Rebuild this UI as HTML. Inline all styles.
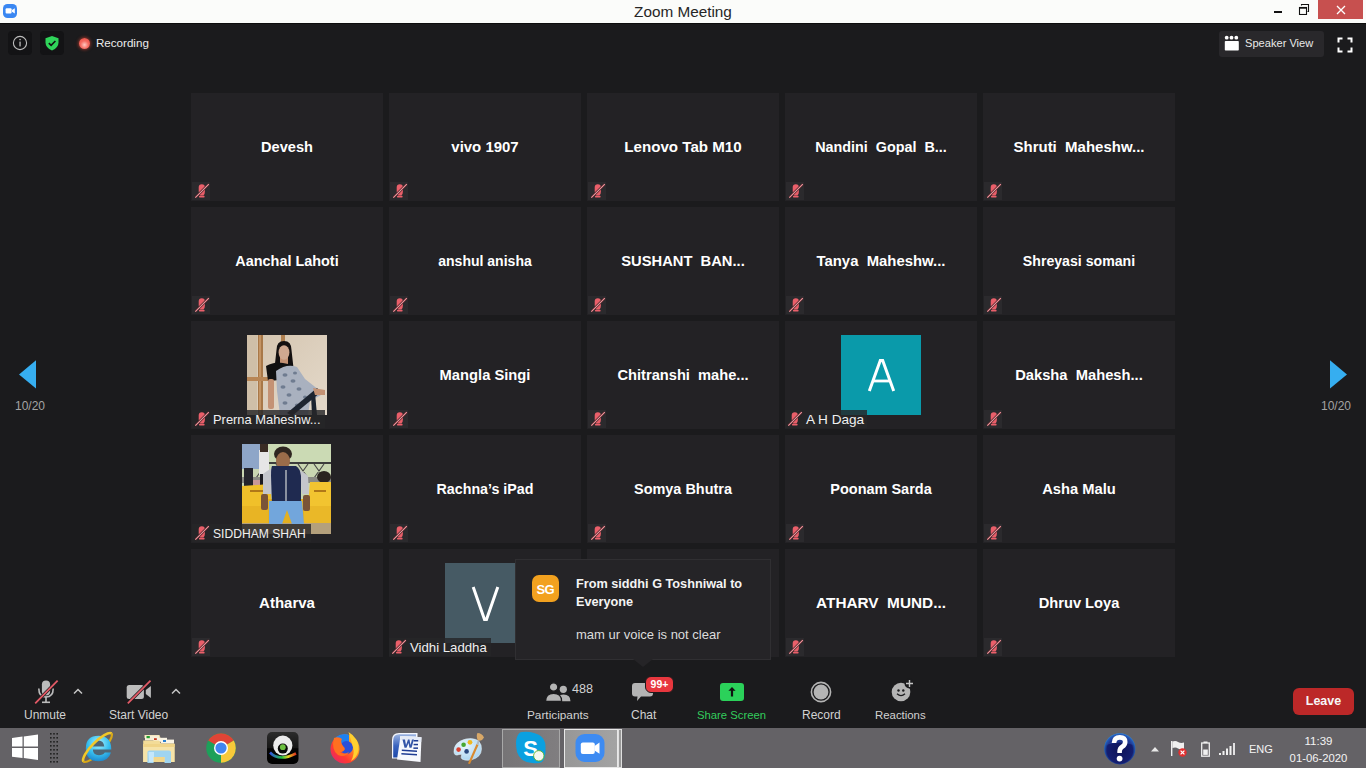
<!DOCTYPE html>
<html><head><meta charset="utf-8"><style>
html,body{margin:0;padding:0;width:1366px;height:768px;overflow:hidden;background:#1b1b1d;font-family:"Liberation Sans",sans-serif;}
.a{position:absolute}
.tile{position:absolute;width:192px;height:108px;background:#232225}
.nm{position:absolute;width:192px;height:20px;line-height:20px;text-align:center;color:#fff;font-weight:bold;font-size:14px;white-space:pre}
.lbl{position:absolute;height:18px;background:rgba(38,38,40,0.82)}
.lt{position:absolute;color:#f0f0f0;font-size:12.5px;line-height:18px;white-space:pre}
.tb{position:absolute;color:#d2d2d2;font-size:12px;line-height:14px;white-space:pre}
</style></head><body>
<!-- title bar -->
<div class="a" style="left:0;top:0;width:1366px;height:23px;background:#fbfcfa"></div>
<div class="a" style="left:0;top:23px;width:1366px;height:1px;background:#0d0d0d"></div>
<svg class="a" style="left:2px;top:3px" width="16" height="16" viewBox="0 0 16 16">
<rect x="1" y="1" width="14" height="14" rx="4.5" fill="#3a87f2"/>
<rect x="3.6" y="5.2" width="6" height="5.4" rx="1" fill="#fff"/>
<path d="M10 7 L12.8 5.2 L12.8 10.6 L10 8.8 Z" fill="#fff"/>
</svg>
<div class="a" style="left:0;top:0;width:1366px;text-align:center;font-size:15.3px;line-height:23px;color:#262626;">Zoom Meeting</div>
<div class="a" style="left:1274px;top:11px;width:8px;height:2px;background:#111"></div>
<svg class="a" style="left:1298px;top:3px" width="12" height="12" viewBox="0 0 12 12">
<rect x="1.5" y="4.5" width="7" height="7" fill="none" stroke="#111" stroke-width="1.1"/>
<rect x="1.5" y="4.5" width="7" height="1.2" fill="#111"/>
<path d="M3.5 2.5 V1.5 H10.5 V8.5 H9.5" fill="none" stroke="#111" stroke-width="1.1"/>
</svg>
<div class="a" style="left:1318px;top:0;width:45px;height:19px;background:#c7504f"></div>
<svg class="a" style="left:1336px;top:5px" width="10" height="10" viewBox="0 0 10 10">
<path d="M1 1 L9 9 M9 1 L1 9" stroke="#fff" stroke-width="1.3"/>
</svg>
<!-- top meeting bar -->
<div class="a" style="left:8px;top:31px;width:24px;height:24px;border-radius:4px;background:#131315"></div>
<svg class="a" style="left:8px;top:31px" width="24" height="24" viewBox="0 0 24 24">
<circle cx="12" cy="12" r="6.6" fill="none" stroke="#bdbdbd" stroke-width="1.1"/>
<rect x="11.4" y="10.6" width="1.3" height="4.8" fill="#bdbdbd"/>
<circle cx="12.05" cy="8.6" r="0.8" fill="#bdbdbd"/>
</svg>
<div class="a" style="left:40px;top:31px;width:24px;height:24px;border-radius:4px;background:#131315"></div>
<svg class="a" style="left:40px;top:31px" width="24" height="24" viewBox="0 0 24 24">
<path d="M12 5 L18.5 7.3 L18.5 11.5 Q18.5 16.5 12 19.5 Q5.5 16.5 5.5 11.5 L5.5 7.3 Z" fill="#2fd45a"/>
<path d="M8.8 12.2 L11.1 14.4 L15.4 10" fill="none" stroke="#111" stroke-width="1.6"/>
</svg>
<div class="a" style="left:78.5px;top:38px;width:11px;height:11px;border-radius:50%;background:radial-gradient(circle at 50% 62%, #ffc8c0 0%, #f46a60 45%, #e8483e 100%);box-shadow:0 0 3px 1px rgba(220,70,50,0.55)"></div>
<div class="a" style="left:96px;top:36px;font-size:11.6px;line-height:14px;color:#ececec;white-space:pre">Recording</div>
<div class="a" style="left:1219px;top:31px;width:105px;height:26px;border-radius:3px;background:#29282b"></div>
<svg class="a" style="left:1224px;top:35px" width="16" height="17" viewBox="0 0 16 17">
<circle cx="2.7" cy="2.7" r="1.9" fill="#fff"/><circle cx="7.5" cy="2.7" r="1.9" fill="#fff"/><circle cx="12.3" cy="2.7" r="1.9" fill="#fff"/>
<rect x="0.8" y="6" width="14" height="9.5" rx="0.8" fill="#fff"/>
</svg>
<div class="a" style="left:1245px;top:36px;font-size:11.1px;line-height:14px;color:#e8e8e8;white-space:pre">Speaker View</div>
<svg class="a" style="left:1337px;top:37px" width="16" height="16" viewBox="0 0 16 16">
<path d="M1.5 5.5 V1.5 H5.5 M10.5 1.5 H14.5 V5.5 M14.5 10.5 V14.5 H10.5 M5.5 14.5 H1.5 V10.5" fill="none" stroke="#fff" stroke-width="2"/>
</svg>
<!-- nav arrows -->
<svg class="a" style="left:17px;top:359px" width="22" height="31" viewBox="0 0 22 31">
<path d="M2 15.4 L19 1.3 L19 29.4 Z" fill="#36aef0"/>
</svg>
<div class="a" style="left:15px;top:399px;font-size:12px;line-height:14px;color:#a4a4a4;white-space:pre">10/20</div>
<svg class="a" style="left:1327px;top:359px" width="22" height="31" viewBox="0 0 22 31">
<path d="M20 15.4 L3 1.3 L3 29.4 Z" fill="#36aef0"/>
</svg>
<div class="a" style="left:1321px;top:399px;font-size:12px;line-height:14px;color:#a4a4a4;white-space:pre">10/20</div>

<div class="tile" style="left:191px;top:93px"></div>
<div class="nm" style="left:191px;top:137px;font-size:14.58px">Devesh</div>
<div style="position:absolute;left:192px;top:182px;width:18px;height:18px;background:#2b2a2d"></div><svg style="position:absolute;left:192px;top:182px" width="18" height="18" viewBox="0 0 18 18"><path d="M6.7 5.3 A3.1 3.1 0 0 1 12.9 5.3 L12.9 9.5 Q12.9 12.5 11.4 13.6 L8.2 13.6 Q6.7 12.5 6.7 9.5 Z" fill="#ea5f6a"/><rect x="7" y="13.8" width="5.6" height="1.6" rx="0.6" fill="#ea5f6a"/><line x1="3.3" y1="15.6" x2="16.8" y2="2.2" stroke="#4a2328" stroke-width="2.6"/><line x1="3.3" y1="15.6" x2="16.8" y2="2.2" stroke="#f39aa2" stroke-width="1.1"/></svg>
<div class="tile" style="left:389px;top:93px"></div>
<div class="nm" style="left:389px;top:137px;font-size:14.96px">vivo 1907</div>
<div style="position:absolute;left:390px;top:182px;width:18px;height:18px;background:#2b2a2d"></div><svg style="position:absolute;left:390px;top:182px" width="18" height="18" viewBox="0 0 18 18"><path d="M6.7 5.3 A3.1 3.1 0 0 1 12.9 5.3 L12.9 9.5 Q12.9 12.5 11.4 13.6 L8.2 13.6 Q6.7 12.5 6.7 9.5 Z" fill="#ea5f6a"/><rect x="7" y="13.8" width="5.6" height="1.6" rx="0.6" fill="#ea5f6a"/><line x1="3.3" y1="15.6" x2="16.8" y2="2.2" stroke="#4a2328" stroke-width="2.6"/><line x1="3.3" y1="15.6" x2="16.8" y2="2.2" stroke="#f39aa2" stroke-width="1.1"/></svg>
<div class="tile" style="left:587px;top:93px"></div>
<div class="nm" style="left:587px;top:137px;font-size:15.14px">Lenovo Tab M10</div>
<div style="position:absolute;left:588px;top:182px;width:18px;height:18px;background:#2b2a2d"></div><svg style="position:absolute;left:588px;top:182px" width="18" height="18" viewBox="0 0 18 18"><path d="M6.7 5.3 A3.1 3.1 0 0 1 12.9 5.3 L12.9 9.5 Q12.9 12.5 11.4 13.6 L8.2 13.6 Q6.7 12.5 6.7 9.5 Z" fill="#ea5f6a"/><rect x="7" y="13.8" width="5.6" height="1.6" rx="0.6" fill="#ea5f6a"/><line x1="3.3" y1="15.6" x2="16.8" y2="2.2" stroke="#4a2328" stroke-width="2.6"/><line x1="3.3" y1="15.6" x2="16.8" y2="2.2" stroke="#f39aa2" stroke-width="1.1"/></svg>
<div class="tile" style="left:785px;top:93px"></div>
<div class="nm" style="left:785px;top:137px;font-size:14.36px">Nandini  Gopal  B...</div>
<div style="position:absolute;left:786px;top:182px;width:18px;height:18px;background:#2b2a2d"></div><svg style="position:absolute;left:786px;top:182px" width="18" height="18" viewBox="0 0 18 18"><path d="M6.7 5.3 A3.1 3.1 0 0 1 12.9 5.3 L12.9 9.5 Q12.9 12.5 11.4 13.6 L8.2 13.6 Q6.7 12.5 6.7 9.5 Z" fill="#ea5f6a"/><rect x="7" y="13.8" width="5.6" height="1.6" rx="0.6" fill="#ea5f6a"/><line x1="3.3" y1="15.6" x2="16.8" y2="2.2" stroke="#4a2328" stroke-width="2.6"/><line x1="3.3" y1="15.6" x2="16.8" y2="2.2" stroke="#f39aa2" stroke-width="1.1"/></svg>
<div class="tile" style="left:983px;top:93px"></div>
<div class="nm" style="left:983px;top:137px;font-size:14.99px">Shruti  Maheshw...</div>
<div style="position:absolute;left:984px;top:182px;width:18px;height:18px;background:#2b2a2d"></div><svg style="position:absolute;left:984px;top:182px" width="18" height="18" viewBox="0 0 18 18"><path d="M6.7 5.3 A3.1 3.1 0 0 1 12.9 5.3 L12.9 9.5 Q12.9 12.5 11.4 13.6 L8.2 13.6 Q6.7 12.5 6.7 9.5 Z" fill="#ea5f6a"/><rect x="7" y="13.8" width="5.6" height="1.6" rx="0.6" fill="#ea5f6a"/><line x1="3.3" y1="15.6" x2="16.8" y2="2.2" stroke="#4a2328" stroke-width="2.6"/><line x1="3.3" y1="15.6" x2="16.8" y2="2.2" stroke="#f39aa2" stroke-width="1.1"/></svg>
<div class="tile" style="left:191px;top:207px"></div>
<div class="nm" style="left:191px;top:251px;font-size:14.43px">Aanchal Lahoti</div>
<div style="position:absolute;left:192px;top:296px;width:18px;height:18px;background:#2b2a2d"></div><svg style="position:absolute;left:192px;top:296px" width="18" height="18" viewBox="0 0 18 18"><path d="M6.7 5.3 A3.1 3.1 0 0 1 12.9 5.3 L12.9 9.5 Q12.9 12.5 11.4 13.6 L8.2 13.6 Q6.7 12.5 6.7 9.5 Z" fill="#ea5f6a"/><rect x="7" y="13.8" width="5.6" height="1.6" rx="0.6" fill="#ea5f6a"/><line x1="3.3" y1="15.6" x2="16.8" y2="2.2" stroke="#4a2328" stroke-width="2.6"/><line x1="3.3" y1="15.6" x2="16.8" y2="2.2" stroke="#f39aa2" stroke-width="1.1"/></svg>
<div class="tile" style="left:389px;top:207px"></div>
<div class="nm" style="left:389px;top:251px;font-size:14.04px">anshul anisha</div>
<div style="position:absolute;left:390px;top:296px;width:18px;height:18px;background:#2b2a2d"></div><svg style="position:absolute;left:390px;top:296px" width="18" height="18" viewBox="0 0 18 18"><path d="M6.7 5.3 A3.1 3.1 0 0 1 12.9 5.3 L12.9 9.5 Q12.9 12.5 11.4 13.6 L8.2 13.6 Q6.7 12.5 6.7 9.5 Z" fill="#ea5f6a"/><rect x="7" y="13.8" width="5.6" height="1.6" rx="0.6" fill="#ea5f6a"/><line x1="3.3" y1="15.6" x2="16.8" y2="2.2" stroke="#4a2328" stroke-width="2.6"/><line x1="3.3" y1="15.6" x2="16.8" y2="2.2" stroke="#f39aa2" stroke-width="1.1"/></svg>
<div class="tile" style="left:587px;top:207px"></div>
<div class="nm" style="left:587px;top:251px;font-size:14.72px">SUSHANT  BAN...</div>
<div style="position:absolute;left:588px;top:296px;width:18px;height:18px;background:#2b2a2d"></div><svg style="position:absolute;left:588px;top:296px" width="18" height="18" viewBox="0 0 18 18"><path d="M6.7 5.3 A3.1 3.1 0 0 1 12.9 5.3 L12.9 9.5 Q12.9 12.5 11.4 13.6 L8.2 13.6 Q6.7 12.5 6.7 9.5 Z" fill="#ea5f6a"/><rect x="7" y="13.8" width="5.6" height="1.6" rx="0.6" fill="#ea5f6a"/><line x1="3.3" y1="15.6" x2="16.8" y2="2.2" stroke="#4a2328" stroke-width="2.6"/><line x1="3.3" y1="15.6" x2="16.8" y2="2.2" stroke="#f39aa2" stroke-width="1.1"/></svg>
<div class="tile" style="left:785px;top:207px"></div>
<div class="nm" style="left:785px;top:251px;font-size:14.88px">Tanya  Maheshw...</div>
<div style="position:absolute;left:786px;top:296px;width:18px;height:18px;background:#2b2a2d"></div><svg style="position:absolute;left:786px;top:296px" width="18" height="18" viewBox="0 0 18 18"><path d="M6.7 5.3 A3.1 3.1 0 0 1 12.9 5.3 L12.9 9.5 Q12.9 12.5 11.4 13.6 L8.2 13.6 Q6.7 12.5 6.7 9.5 Z" fill="#ea5f6a"/><rect x="7" y="13.8" width="5.6" height="1.6" rx="0.6" fill="#ea5f6a"/><line x1="3.3" y1="15.6" x2="16.8" y2="2.2" stroke="#4a2328" stroke-width="2.6"/><line x1="3.3" y1="15.6" x2="16.8" y2="2.2" stroke="#f39aa2" stroke-width="1.1"/></svg>
<div class="tile" style="left:983px;top:207px"></div>
<div class="nm" style="left:983px;top:251px;font-size:14.13px">Shreyasi somani</div>
<div style="position:absolute;left:984px;top:296px;width:18px;height:18px;background:#2b2a2d"></div><svg style="position:absolute;left:984px;top:296px" width="18" height="18" viewBox="0 0 18 18"><path d="M6.7 5.3 A3.1 3.1 0 0 1 12.9 5.3 L12.9 9.5 Q12.9 12.5 11.4 13.6 L8.2 13.6 Q6.7 12.5 6.7 9.5 Z" fill="#ea5f6a"/><rect x="7" y="13.8" width="5.6" height="1.6" rx="0.6" fill="#ea5f6a"/><line x1="3.3" y1="15.6" x2="16.8" y2="2.2" stroke="#4a2328" stroke-width="2.6"/><line x1="3.3" y1="15.6" x2="16.8" y2="2.2" stroke="#f39aa2" stroke-width="1.1"/></svg>
<div class="tile" style="left:191px;top:321px"></div>
<div class="tile" style="left:389px;top:321px"></div>
<div class="nm" style="left:389px;top:365px;font-size:14.72px">Mangla Singi</div>
<div style="position:absolute;left:390px;top:410px;width:18px;height:18px;background:#2b2a2d"></div><svg style="position:absolute;left:390px;top:410px" width="18" height="18" viewBox="0 0 18 18"><path d="M6.7 5.3 A3.1 3.1 0 0 1 12.9 5.3 L12.9 9.5 Q12.9 12.5 11.4 13.6 L8.2 13.6 Q6.7 12.5 6.7 9.5 Z" fill="#ea5f6a"/><rect x="7" y="13.8" width="5.6" height="1.6" rx="0.6" fill="#ea5f6a"/><line x1="3.3" y1="15.6" x2="16.8" y2="2.2" stroke="#4a2328" stroke-width="2.6"/><line x1="3.3" y1="15.6" x2="16.8" y2="2.2" stroke="#f39aa2" stroke-width="1.1"/></svg>
<div class="tile" style="left:587px;top:321px"></div>
<div class="nm" style="left:587px;top:365px;font-size:14.66px">Chitranshi  mahe...</div>
<div style="position:absolute;left:588px;top:410px;width:18px;height:18px;background:#2b2a2d"></div><svg style="position:absolute;left:588px;top:410px" width="18" height="18" viewBox="0 0 18 18"><path d="M6.7 5.3 A3.1 3.1 0 0 1 12.9 5.3 L12.9 9.5 Q12.9 12.5 11.4 13.6 L8.2 13.6 Q6.7 12.5 6.7 9.5 Z" fill="#ea5f6a"/><rect x="7" y="13.8" width="5.6" height="1.6" rx="0.6" fill="#ea5f6a"/><line x1="3.3" y1="15.6" x2="16.8" y2="2.2" stroke="#4a2328" stroke-width="2.6"/><line x1="3.3" y1="15.6" x2="16.8" y2="2.2" stroke="#f39aa2" stroke-width="1.1"/></svg>
<div class="tile" style="left:785px;top:321px"></div>
<div class="tile" style="left:983px;top:321px"></div>
<div class="nm" style="left:983px;top:365px;font-size:14.72px">Daksha  Mahesh...</div>
<div style="position:absolute;left:984px;top:410px;width:18px;height:18px;background:#2b2a2d"></div><svg style="position:absolute;left:984px;top:410px" width="18" height="18" viewBox="0 0 18 18"><path d="M6.7 5.3 A3.1 3.1 0 0 1 12.9 5.3 L12.9 9.5 Q12.9 12.5 11.4 13.6 L8.2 13.6 Q6.7 12.5 6.7 9.5 Z" fill="#ea5f6a"/><rect x="7" y="13.8" width="5.6" height="1.6" rx="0.6" fill="#ea5f6a"/><line x1="3.3" y1="15.6" x2="16.8" y2="2.2" stroke="#4a2328" stroke-width="2.6"/><line x1="3.3" y1="15.6" x2="16.8" y2="2.2" stroke="#f39aa2" stroke-width="1.1"/></svg>
<div class="tile" style="left:191px;top:435px"></div>
<div class="tile" style="left:389px;top:435px"></div>
<div class="nm" style="left:389px;top:479px;font-size:14.27px">Rachna’s iPad</div>
<div style="position:absolute;left:390px;top:524px;width:18px;height:18px;background:#2b2a2d"></div><svg style="position:absolute;left:390px;top:524px" width="18" height="18" viewBox="0 0 18 18"><path d="M6.7 5.3 A3.1 3.1 0 0 1 12.9 5.3 L12.9 9.5 Q12.9 12.5 11.4 13.6 L8.2 13.6 Q6.7 12.5 6.7 9.5 Z" fill="#ea5f6a"/><rect x="7" y="13.8" width="5.6" height="1.6" rx="0.6" fill="#ea5f6a"/><line x1="3.3" y1="15.6" x2="16.8" y2="2.2" stroke="#4a2328" stroke-width="2.6"/><line x1="3.3" y1="15.6" x2="16.8" y2="2.2" stroke="#f39aa2" stroke-width="1.1"/></svg>
<div class="tile" style="left:587px;top:435px"></div>
<div class="nm" style="left:587px;top:479px;font-size:14.46px">Somya Bhutra</div>
<div style="position:absolute;left:588px;top:524px;width:18px;height:18px;background:#2b2a2d"></div><svg style="position:absolute;left:588px;top:524px" width="18" height="18" viewBox="0 0 18 18"><path d="M6.7 5.3 A3.1 3.1 0 0 1 12.9 5.3 L12.9 9.5 Q12.9 12.5 11.4 13.6 L8.2 13.6 Q6.7 12.5 6.7 9.5 Z" fill="#ea5f6a"/><rect x="7" y="13.8" width="5.6" height="1.6" rx="0.6" fill="#ea5f6a"/><line x1="3.3" y1="15.6" x2="16.8" y2="2.2" stroke="#4a2328" stroke-width="2.6"/><line x1="3.3" y1="15.6" x2="16.8" y2="2.2" stroke="#f39aa2" stroke-width="1.1"/></svg>
<div class="tile" style="left:785px;top:435px"></div>
<div class="nm" style="left:785px;top:479px;font-size:14.49px">Poonam Sarda</div>
<div style="position:absolute;left:786px;top:524px;width:18px;height:18px;background:#2b2a2d"></div><svg style="position:absolute;left:786px;top:524px" width="18" height="18" viewBox="0 0 18 18"><path d="M6.7 5.3 A3.1 3.1 0 0 1 12.9 5.3 L12.9 9.5 Q12.9 12.5 11.4 13.6 L8.2 13.6 Q6.7 12.5 6.7 9.5 Z" fill="#ea5f6a"/><rect x="7" y="13.8" width="5.6" height="1.6" rx="0.6" fill="#ea5f6a"/><line x1="3.3" y1="15.6" x2="16.8" y2="2.2" stroke="#4a2328" stroke-width="2.6"/><line x1="3.3" y1="15.6" x2="16.8" y2="2.2" stroke="#f39aa2" stroke-width="1.1"/></svg>
<div class="tile" style="left:983px;top:435px"></div>
<div class="nm" style="left:983px;top:479px;font-size:14.73px">Asha Malu</div>
<div style="position:absolute;left:984px;top:524px;width:18px;height:18px;background:#2b2a2d"></div><svg style="position:absolute;left:984px;top:524px" width="18" height="18" viewBox="0 0 18 18"><path d="M6.7 5.3 A3.1 3.1 0 0 1 12.9 5.3 L12.9 9.5 Q12.9 12.5 11.4 13.6 L8.2 13.6 Q6.7 12.5 6.7 9.5 Z" fill="#ea5f6a"/><rect x="7" y="13.8" width="5.6" height="1.6" rx="0.6" fill="#ea5f6a"/><line x1="3.3" y1="15.6" x2="16.8" y2="2.2" stroke="#4a2328" stroke-width="2.6"/><line x1="3.3" y1="15.6" x2="16.8" y2="2.2" stroke="#f39aa2" stroke-width="1.1"/></svg>
<div class="tile" style="left:191px;top:549px"></div>
<div class="nm" style="left:191px;top:593px;font-size:15.0px">Atharva</div>
<div style="position:absolute;left:192px;top:638px;width:18px;height:18px;background:#2b2a2d"></div><svg style="position:absolute;left:192px;top:638px" width="18" height="18" viewBox="0 0 18 18"><path d="M6.7 5.3 A3.1 3.1 0 0 1 12.9 5.3 L12.9 9.5 Q12.9 12.5 11.4 13.6 L8.2 13.6 Q6.7 12.5 6.7 9.5 Z" fill="#ea5f6a"/><rect x="7" y="13.8" width="5.6" height="1.6" rx="0.6" fill="#ea5f6a"/><line x1="3.3" y1="15.6" x2="16.8" y2="2.2" stroke="#4a2328" stroke-width="2.6"/><line x1="3.3" y1="15.6" x2="16.8" y2="2.2" stroke="#f39aa2" stroke-width="1.1"/></svg>
<div class="tile" style="left:389px;top:549px"></div>
<div class="tile" style="left:587px;top:549px"></div>
<div class="tile" style="left:785px;top:549px"></div>
<div class="nm" style="left:785px;top:593px;font-size:15.35px">ATHARV  MUND...</div>
<div style="position:absolute;left:786px;top:638px;width:18px;height:18px;background:#2b2a2d"></div><svg style="position:absolute;left:786px;top:638px" width="18" height="18" viewBox="0 0 18 18"><path d="M6.7 5.3 A3.1 3.1 0 0 1 12.9 5.3 L12.9 9.5 Q12.9 12.5 11.4 13.6 L8.2 13.6 Q6.7 12.5 6.7 9.5 Z" fill="#ea5f6a"/><rect x="7" y="13.8" width="5.6" height="1.6" rx="0.6" fill="#ea5f6a"/><line x1="3.3" y1="15.6" x2="16.8" y2="2.2" stroke="#4a2328" stroke-width="2.6"/><line x1="3.3" y1="15.6" x2="16.8" y2="2.2" stroke="#f39aa2" stroke-width="1.1"/></svg>
<div class="tile" style="left:983px;top:549px"></div>
<div class="nm" style="left:983px;top:593px;font-size:14.66px">Dhruv Loya</div>
<div style="position:absolute;left:984px;top:638px;width:18px;height:18px;background:#2b2a2d"></div><svg style="position:absolute;left:984px;top:638px" width="18" height="18" viewBox="0 0 18 18"><path d="M6.7 5.3 A3.1 3.1 0 0 1 12.9 5.3 L12.9 9.5 Q12.9 12.5 11.4 13.6 L8.2 13.6 Q6.7 12.5 6.7 9.5 Z" fill="#ea5f6a"/><rect x="7" y="13.8" width="5.6" height="1.6" rx="0.6" fill="#ea5f6a"/><line x1="3.3" y1="15.6" x2="16.8" y2="2.2" stroke="#4a2328" stroke-width="2.6"/><line x1="3.3" y1="15.6" x2="16.8" y2="2.2" stroke="#f39aa2" stroke-width="1.1"/></svg>
<svg class="a" style="left:247px;top:335px;filter:blur(0.35px)" width="80" height="80" viewBox="0 0 80 80">
<defs><linearGradient id="wall" x1="0" y1="0" x2="1" y2="1"><stop offset="0" stop-color="#d4c4ae"/><stop offset="0.5" stop-color="#dccfbd"/><stop offset="1" stop-color="#e4d9ca"/></linearGradient></defs>
<rect width="80" height="80" fill="url(#wall)"/>
<rect x="0" y="0" width="10" height="80" fill="#cfbfa8"/>
<rect x="11" y="0" width="5" height="80" fill="#a87848"/>
<rect x="12" y="0" width="2" height="80" fill="#c49464"/>
<rect x="34" y="0" width="4" height="12" fill="#b08050"/>
<rect x="0" y="42" width="26" height="4" fill="#b88656"/>
<path d="M29.5 15 Q29.5 6 37 6 Q44.5 6 44.5 15 L46.5 33 L41 31 L41 22 L33 22 L33 31 L27.5 33 Z" fill="#141010"/>
<rect x="33" y="21" width="8" height="9" fill="#c49274"/>
<ellipse cx="37" cy="17.5" rx="5.4" ry="7.3" fill="#cfa890"/>
<path d="M19 31 Q28 26 36 28 L46 30 L46 44 L21 46 Z" fill="#111"/>
<path d="M29 36 Q40 28 50 32 L58 44 L72 55 L74 60 L63 66 L61 80 L33 80 L30 56 Z" fill="#a9b1bf"/>
<g fill="#6f7c90"><ellipse cx="38" cy="40" rx="2.5" ry="1.8"/><ellipse cx="46" cy="46" rx="2.5" ry="1.8"/><ellipse cx="36" cy="52" rx="2.5" ry="1.8"/><ellipse cx="52" cy="54" rx="2.5" ry="1.8"/><ellipse cx="42" cy="60" rx="2.5" ry="1.8"/><ellipse cx="58" cy="62" rx="2" ry="1.6"/><ellipse cx="38" cy="68" rx="2.5" ry="1.8"/><ellipse cx="50" cy="70" rx="2.2" ry="1.6"/><ellipse cx="48" cy="38" rx="2" ry="1.5"/></g>
<path d="M40 78 L70 53 L74 57 L45 81 Z" fill="#1c2430"/>
<path d="M64 60 L68 58 L70 80 L65 80 Z" fill="#1c2430"/>
<rect x="21" y="44" width="6" height="30" rx="2" fill="#c49274"/>
<path d="M66 53 L78 55 L78 60 L68 60 Z" fill="#c49274"/>
</svg><div class="lbl" style="left:192px;top:410px;width:133px"></div><svg style="position:absolute;left:192px;top:410px" width="18" height="18" viewBox="0 0 18 18"><path d="M6.7 5.3 A3.1 3.1 0 0 1 12.9 5.3 L12.9 9.5 Q12.9 12.5 11.4 13.6 L8.2 13.6 Q6.7 12.5 6.7 9.5 Z" fill="#ea5f6a"/><rect x="7" y="13.8" width="5.6" height="1.6" rx="0.6" fill="#ea5f6a"/><line x1="3.3" y1="15.6" x2="16.8" y2="2.2" stroke="#4a2328" stroke-width="2.6"/><line x1="3.3" y1="15.6" x2="16.8" y2="2.2" stroke="#f39aa2" stroke-width="1.1"/></svg><div class="lt" style="left:213px;top:411px;font-size:12.9px">Prerna Maheshw...</div><svg class="a" style="left:242px;top:444px" width="89" height="90" viewBox="0 0 89 90">
<rect width="89" height="90" fill="#c9d6b2"/>
<rect x="0" y="0" width="89" height="19" fill="#cbdab4"/>
<rect x="10" y="18" width="79" height="2" fill="#3c3c3c"/>
<g stroke="#4a4a4a" stroke-width="1.2" fill="none"><path d="M14 20 L24 34 M24 20 L14 34 M34 20 L44 34 M44 20 L34 34 M56 20 L66 34 M66 20 L56 34 M72 20 L82 34 M82 20 L72 34"/></g>
<rect x="0" y="33" width="89" height="6" fill="#8a8a84"/>
<rect x="2" y="36" width="18" height="6" fill="#c89898"/>
<rect x="0" y="0" width="19" height="25" fill="#8ea6c8"/>
<rect x="2" y="24" width="9" height="22" fill="#24242c"/>
<rect x="17" y="6" width="10" height="25" fill="#e6e6e6"/>
<rect x="18" y="0" width="8" height="8" fill="#3a2c24"/>
<rect x="18" y="30" width="7" height="12" fill="#1c1c22"/>
<ellipse cx="82" cy="33" rx="7" ry="6" fill="#2a2420"/>
<path d="M0 42 L28 40 L30 62 L0 62 Z" fill="#f0c02a"/>
<path d="M0 62 L28 62 L28 80 L0 80 Z" fill="#e8b424"/>
<path d="M68 38 L89 38 L89 62 L66 62 Z" fill="#f2c430"/>
<path d="M60 62 L89 62 L89 80 L58 80 Z" fill="#eab828"/>
<rect x="8" y="46" width="14" height="2" fill="#b07818"/>
<rect x="72" y="46" width="12" height="2" fill="#b07818"/>
<rect x="26" y="55" width="36" height="25" fill="#e4b020"/>
<rect x="0" y="79" width="89" height="11" fill="#b4a07c"/>
<ellipse cx="41" cy="10" rx="9" ry="7.5" fill="#2e2620"/>
<ellipse cx="41" cy="17" rx="7" ry="9" fill="#9a6c4a"/>
<path d="M21 30 Q28 24 33 24 L52 24 Q60 26 66 32 L67 50 L60 50 L59 40 L58 58 L31 58 L31 40 L30 50 L21 50 Z" fill="#c4c6cc"/>
<path d="M30 22 L54 22 Q58 24 59 32 L59 61 L30 61 L29 32 Q29 24 30 22 Z" fill="#1f2a50"/>
<rect x="43" y="26" width="2" height="34" fill="#8a90a0"/>
<path d="M27 57 L60 57 L62 80 L50 80 L45 66 L40 80 L27 80 Z" fill="#72a6dc"/>
<rect x="19" y="50" width="7" height="16" rx="2" fill="#7a5438"/>
<rect x="61" y="51" width="7" height="16" rx="2" fill="#7a5438"/>
</svg><div class="lbl" style="left:192px;top:524px;width:119px"></div><svg style="position:absolute;left:192px;top:524px" width="18" height="18" viewBox="0 0 18 18"><path d="M6.7 5.3 A3.1 3.1 0 0 1 12.9 5.3 L12.9 9.5 Q12.9 12.5 11.4 13.6 L8.2 13.6 Q6.7 12.5 6.7 9.5 Z" fill="#ea5f6a"/><rect x="7" y="13.8" width="5.6" height="1.6" rx="0.6" fill="#ea5f6a"/><line x1="3.3" y1="15.6" x2="16.8" y2="2.2" stroke="#4a2328" stroke-width="2.6"/><line x1="3.3" y1="15.6" x2="16.8" y2="2.2" stroke="#f39aa2" stroke-width="1.1"/></svg><div class="lt" style="left:213px;top:525px;font-size:12.1px">SIDDHAM SHAH</div><div class="a" style="left:841px;top:335px;width:80px;height:80px;background:#0a9aaa"></div><svg class="a" style="left:841px;top:335px" width="80" height="80" viewBox="0 0 80 80"><path d="M28.3 56 L39.3 25.6 H41.7 L52.7 56" fill="none" stroke="#fff" stroke-width="3" stroke-linejoin="miter"/><path d="M32.5 46 H48.5" stroke="#fff" stroke-width="2.8"/></svg><div class="lbl" style="left:785px;top:410px;width:82px"></div><svg style="position:absolute;left:785px;top:410px" width="18" height="18" viewBox="0 0 18 18"><path d="M6.7 5.3 A3.1 3.1 0 0 1 12.9 5.3 L12.9 9.5 Q12.9 12.5 11.4 13.6 L8.2 13.6 Q6.7 12.5 6.7 9.5 Z" fill="#ea5f6a"/><rect x="7" y="13.8" width="5.6" height="1.6" rx="0.6" fill="#ea5f6a"/><line x1="3.3" y1="15.6" x2="16.8" y2="2.2" stroke="#4a2328" stroke-width="2.6"/><line x1="3.3" y1="15.6" x2="16.8" y2="2.2" stroke="#f39aa2" stroke-width="1.1"/></svg><div class="lt" style="left:806px;top:411px;font-size:13.6px">A H Daga</div><div class="a" style="left:445px;top:563px;width:80px;height:80px;background:#465a64"></div><svg class="a" style="left:445px;top:563px" width="80" height="80" viewBox="0 0 80 80"><path d="M28.2 24 L39.5 56.5 H41.5 L52.8 24" fill="none" stroke="#fff" stroke-width="3"/></svg><div class="lbl" style="left:389px;top:638px;width:102px"></div><svg style="position:absolute;left:389px;top:638px" width="18" height="18" viewBox="0 0 18 18"><path d="M6.7 5.3 A3.1 3.1 0 0 1 12.9 5.3 L12.9 9.5 Q12.9 12.5 11.4 13.6 L8.2 13.6 Q6.7 12.5 6.7 9.5 Z" fill="#ea5f6a"/><rect x="7" y="13.8" width="5.6" height="1.6" rx="0.6" fill="#ea5f6a"/><line x1="3.3" y1="15.6" x2="16.8" y2="2.2" stroke="#4a2328" stroke-width="2.6"/><line x1="3.3" y1="15.6" x2="16.8" y2="2.2" stroke="#f39aa2" stroke-width="1.1"/></svg><div class="lt" style="left:410px;top:639px;font-size:13.2px">Vidhi Laddha</div>
<!-- chat popup -->
<div class="a" style="left:515px;top:559px;width:256px;height:101px;background:#252427;border:1px solid #302f32;box-sizing:border-box"></div>
<svg class="a" style="left:633px;top:659px" width="20" height="9" viewBox="0 0 20 9"><path d="M0 0 L20 0 L10 8 Z" fill="#252427"/></svg>
<div class="a" style="left:532px;top:575px;width:27px;height:27px;border-radius:7px;background:#f2a11f"></div><div class="a" style="left:532px;top:576px;width:27px;height:27px;color:#fff;font-weight:bold;font-size:13px;letter-spacing:-0.8px;line-height:27px;text-align:center;text-indent:-0.6px">SG</div>
<div class="a" style="left:576px;top:575px;width:190px;font-weight:bold;font-size:12.7px;line-height:18px;color:#f4f4f4">From siddhi G Toshniwal to<br>Everyone</div>
<div class="a" style="left:576px;top:627px;font-size:13px;line-height:16px;color:#dcdcdc;white-space:pre">mam ur voice is not clear</div>
<!-- toolbar -->
<svg class="a" style="left:30px;top:676px" width="32" height="32" viewBox="0 0 32 32">
<rect x="11.9" y="4.5" width="8.2" height="15" rx="4.1" fill="#bcbcbc"/>
<path d="M8.8 12.5 Q8.8 21 16 21 Q23.2 21 23.2 12.5" fill="none" stroke="#bcbcbc" stroke-width="1.6"/>
<rect x="15.2" y="20.5" width="1.6" height="5.5" fill="#bcbcbc"/>
<rect x="12" y="25.5" width="8" height="1.6" fill="#bcbcbc"/>
<line x1="5.2" y1="27.3" x2="27.6" y2="4.7" stroke="#1b1b1d" stroke-width="3.2"/>
<line x1="5.2" y1="27.3" x2="27.6" y2="4.7" stroke="#e35a66" stroke-width="1.8"/>
</svg>
<svg class="a" style="left:72px;top:687px" width="12" height="9" viewBox="0 0 12 9"><path d="M2 6.5 L6 2.5 L10 6.5" fill="none" stroke="#c6c6c6" stroke-width="1.5"/></svg>
<div class="tb" style="left:24px;top:708px">Unmute</div>
<svg class="a" style="left:122px;top:676px" width="34" height="32" viewBox="0 0 34 32">
<rect x="4.7" y="9" width="17.2" height="14" rx="2.5" fill="#bcbcbc"/>
<path d="M23.8 14 L28.9 10 L28.9 22 L23.8 18 Z" fill="#bcbcbc"/>
<line x1="5.8" y1="27.3" x2="28.5" y2="4.6" stroke="#1b1b1d" stroke-width="3.2"/>
<line x1="5.8" y1="27.3" x2="28.5" y2="4.6" stroke="#e35a66" stroke-width="1.8"/>
</svg>
<svg class="a" style="left:170px;top:687px" width="12" height="9" viewBox="0 0 12 9"><path d="M2 6.5 L6 2.5 L10 6.5" fill="none" stroke="#c6c6c6" stroke-width="1.5"/></svg>
<div class="tb" style="left:109px;top:708px">Start Video</div>
<svg class="a" style="left:544px;top:680px" width="28" height="24" viewBox="0 0 28 24">
<circle cx="19.3" cy="9.3" r="3.6" fill="#b4b4b4"/>
<path d="M12 21.3 Q12 14.6 19.5 14.6 Q26.5 14.6 26.5 21.3 Z" fill="#b4b4b4"/>
<circle cx="9.6" cy="7" r="4.2" fill="#b4b4b4" stroke="#1b1b1d" stroke-width="1.2"/>
<path d="M1.6 21.3 Q1.6 13.4 9.6 13.4 Q17.6 13.4 17.6 21.3 Z" fill="#b4b4b4" stroke="#1b1b1d" stroke-width="1.2"/>
</svg>
<div class="tb" style="left:572px;top:682px;font-size:12.6px">488</div>
<div class="tb" style="left:527px;top:708px;font-size:11.8px">Participants</div>
<svg class="a" style="left:630px;top:680px" width="26" height="24" viewBox="0 0 26 24">
<path d="M5 3 H20 Q23 3 23 6 V13.5 Q23 16.5 20 16.5 H11 L7 21 L7.5 16.5 H5 Q2 16.5 2 13.5 V6 Q2 3 5 3 Z" fill="#b4b4b4"/>
</svg>
<div class="a" style="left:645px;top:676px;width:29px;height:17px;border-radius:6px;background:#e8373e;border:1.5px solid #1b1b1d;box-sizing:border-box;color:#fff;font-weight:bold;font-size:10.5px;line-height:14px;text-align:center">99+</div>
<div class="tb" style="left:631px;top:708px">Chat</div>
<div class="a" style="left:720px;top:683px;width:24px;height:18px;border-radius:3px;background:#2bd15a"></div>
<svg class="a" style="left:720px;top:683px" width="24" height="18" viewBox="0 0 24 18">
<path d="M12 4 L15.6 7.8 H13.1 V13.5 H10.9 V7.8 H8.4 Z" fill="#111"/>
</svg>
<div class="tb" style="left:697px;top:708px;font-size:11.3px;color:#33cc5c">Share Screen</div>
<svg class="a" style="left:809px;top:680px" width="24" height="24" viewBox="0 0 24 24">
<circle cx="12" cy="12" r="9.6" fill="none" stroke="#b4b4b4" stroke-width="1.6"/>
<circle cx="12" cy="12" r="7.4" fill="#b4b4b4"/>
</svg>
<div class="tb" style="left:802px;top:708px">Record</div>
<svg class="a" style="left:888px;top:678px" width="28" height="26" viewBox="0 0 28 26">
<circle cx="13" cy="14" r="9.3" fill="#b4b4b4"/>
<circle cx="10.5" cy="12.5" r="1.2" fill="#1b1b1d"/><circle cx="15.3" cy="12.5" r="1.2" fill="#1b1b1d"/>
<path d="M9 15.8 Q13 19.5 17 15.8" fill="none" stroke="#1b1b1d" stroke-width="1.3"/>
<circle cx="21.5" cy="5.5" r="5" fill="#1b1b1d"/>
<path d="M21.5 2 V9 M18 5.5 H25" stroke="#c4c4c4" stroke-width="1.4"/>
</svg>
<div class="tb" style="left:875px;top:708px;font-size:11.4px">Reactions</div>
<div class="a" style="left:1293px;top:688px;width:61px;height:27px;border-radius:6px;background:#bc2828;color:#f6f6f6;font-weight:bold;font-size:12.5px;line-height:27px;text-align:center">Leave</div>

<!-- taskbar -->
<div class="a" style="left:0;top:728px;width:1366px;height:40px;background:#646266"></div>
<svg class="a" style="left:11px;top:734px" width="28" height="27" viewBox="0 0 28 27">
<path d="M1 4 L11.5 2.6 L11.5 12.6 L1 12.6 Z M12.8 2.4 L27 0.6 L27 12.6 L12.8 12.6 Z M1 13.9 L11.5 13.9 L11.5 24 L1 22.7 Z M12.8 13.9 L27 13.9 L27 26 L12.8 24.1 Z" fill="#fff"/>
</svg>
<svg class="a" style="left:49px;top:732px" width="10" height="32" viewBox="0 0 10 32">
<g fill="#222">
<rect x="1" y="1" width="1.6" height="1.6"/><rect x="4.2" y="1" width="1.6" height="1.6"/><rect x="7.4" y="1" width="1.6" height="1.6"/>
<rect x="1" y="5" width="1.6" height="1.6"/><rect x="4.2" y="5" width="1.6" height="1.6"/><rect x="7.4" y="5" width="1.6" height="1.6"/>
<rect x="1" y="9" width="1.6" height="1.6"/><rect x="4.2" y="9" width="1.6" height="1.6"/><rect x="7.4" y="9" width="1.6" height="1.6"/>
<rect x="1" y="13" width="1.6" height="1.6"/><rect x="4.2" y="13" width="1.6" height="1.6"/><rect x="7.4" y="13" width="1.6" height="1.6"/>
<rect x="1" y="17" width="1.6" height="1.6"/><rect x="4.2" y="17" width="1.6" height="1.6"/><rect x="7.4" y="17" width="1.6" height="1.6"/>
<rect x="1" y="21" width="1.6" height="1.6"/><rect x="4.2" y="21" width="1.6" height="1.6"/><rect x="7.4" y="21" width="1.6" height="1.6"/>
<rect x="1" y="25" width="1.6" height="1.6"/><rect x="4.2" y="25" width="1.6" height="1.6"/><rect x="7.4" y="25" width="1.6" height="1.6"/>
<rect x="1" y="29" width="1.6" height="1.6"/><rect x="4.2" y="29" width="1.6" height="1.6"/><rect x="7.4" y="29" width="1.6" height="1.6"/>
</g></svg>
<!-- IE -->
<svg class="a" style="left:78px;top:728px" width="40" height="40" viewBox="0 0 40 40">
<defs><radialGradient id="ieb" cx="0.5" cy="0.3" r="0.75"><stop offset="0" stop-color="#a8f0ff"/><stop offset="0.55" stop-color="#38c0f0"/><stop offset="1" stop-color="#1a80c8"/></radialGradient></defs>
<path d="M33.6 5.4 A20 6 -45 0 1 5.4 33.6" fill="none" stroke="#d8a818" stroke-width="2.2"/>
<circle cx="20.5" cy="20.5" r="12.4" fill="#4e6676"/>
<path d="M20.5 7.8 Q33.3 7.8 33.3 21.5 L14.8 21.5 Q15.2 27.2 20.8 27.2 Q25 27.2 26.8 24.5 L33 24.5 Q30.5 33.3 20.5 33.3 Q7.8 33.3 7.8 20.5 Q7.8 7.8 20.5 7.8 Z M14.9 18.6 L26.3 18.6 Q25.6 12.6 20.6 12.6 Q15.6 12.6 14.9 18.6 Z" fill="url(#ieb)"/>
<path d="M5.4 33.6 A20 6 -45 0 1 33.6 5.4" fill="none" stroke="#f2c828" stroke-width="2.6"/>
</svg>
<!-- Explorer -->
<svg class="a" style="left:138px;top:728px" width="40" height="40" viewBox="0 0 40 40">
<path d="M6.5 7 H21.5 L22.5 10 H6.5 Z" fill="#f2dfa8"/>
<rect x="7" y="7.5" width="14" height="5" fill="#f8f0d8"/>
<rect x="8.5" y="8" width="3.3" height="2.2" fill="#22a030"/>
<rect x="15.5" y="9.8" width="13.5" height="4" fill="#faf4e4"/>
<rect x="16" y="10.2" width="2.8" height="1.8" fill="#c83a20"/>
<rect x="23" y="11.6" width="13" height="4" fill="#faf4e4"/>
<rect x="25" y="12" width="3" height="2" fill="#2a80d0"/>
<path d="M5.2 12.5 H21 L23 15.5 H36.5 V34 H5.2 Z" fill="#f3dc98"/>
<path d="M5.2 16 H36.5 V34 H5.2 Z" fill="#f6e3a8"/>
<rect x="5.2" y="16" width="31.3" height="3" fill="#f0d488"/>
<path d="M9.4 35 V24.5 Q9.4 22.6 11.5 22.6 H31 Q33 22.6 33 24.5 V35 H26.5 V29 H15.6 V35 Z" fill="#9fd4f0"/>
<path d="M10.5 24 H16 V34 H11 Z" fill="#d4f0ff" opacity="0.7"/>
<rect x="15.6" y="29" width="10.9" height="5" fill="#f2d68a"/>
</svg>
<!-- Chrome -->
<svg class="a" style="left:206px;top:733px" width="30" height="30" viewBox="0 0 30 30">
<circle cx="15" cy="15" r="14.8" fill="#1da05a"/>
<path d="M15 15 L2.2 7.6 A14.8 14.8 0 0 1 27.8 7.6 Z" fill="#e04436"/>
<path d="M15 15 L27.8 7.6 A14.8 14.8 0 0 1 15 29.8 Z" fill="#f8c93a"/>
<circle cx="15" cy="15" r="7" fill="#fff"/>
<circle cx="15" cy="15" r="5.6" fill="#4285f0"/>
</svg>
<!-- webcam app -->
<svg class="a" style="left:267px;top:732px" width="32" height="32" viewBox="0 0 32 32">
<defs><linearGradient id="wcg" x1="0" y1="0" x2="0" y2="1"><stop offset="0" stop-color="#2c2c2c"/><stop offset="0.5" stop-color="#161616"/><stop offset="0.52" stop-color="#050505"/><stop offset="1" stop-color="#000"/></linearGradient>
<linearGradient id="rb" x1="0" y1="0" x2="1" y2="0"><stop offset="0" stop-color="#3050e0"/><stop offset="0.45" stop-color="#20c040"/><stop offset="0.7" stop-color="#e0d020"/><stop offset="1" stop-color="#e03020"/></linearGradient></defs>
<rect x="0" y="0" width="31.5" height="32" rx="5" fill="url(#wcg)"/>
<path d="M3 20.5 Q12 30 29 21.5" fill="none" stroke="url(#rb)" stroke-width="2.6"/>
<ellipse cx="15.8" cy="13.5" rx="9.6" ry="10" fill="#ececec"/>
<circle cx="15.8" cy="16.6" r="5" fill="#0a0a0a"/>
<circle cx="15.8" cy="15.2" r="2.9" fill="#6cc040"/>
</svg>
<!-- Firefox -->
<svg class="a" style="left:325px;top:728px" width="40" height="40" viewBox="0 0 40 40">
<defs><linearGradient id="ffo" x1="0" y1="1" x2="1" y2="0"><stop offset="0" stop-color="#e0207a"/><stop offset="0.35" stop-color="#ff3a30"/><stop offset="0.7" stop-color="#ff9a20"/><stop offset="1" stop-color="#ffe030"/></linearGradient></defs>
<circle cx="20" cy="21" r="14.5" fill="url(#ffo)"/>
<path d="M11 9 Q18 4 24 7 L24 20 Q22 26 16 24 Q22 22 20 18 Q14 18 14 14 Z" fill="#1e80f0"/>
<circle cx="21.5" cy="19.5" r="6.5" fill="#2a50d8"/>
<path d="M9 10 Q14 8 17 11 Q15 14 18 18 Q23 22 15 24.5 Q19 27 24 24 Q20 30 13 27 Q6 22 9 10 Z" fill="#ff7020"/>
<path d="M23.5 4 Q34 10 33.5 22 Q32 30 26 33 Q30 26 28 19 Q26 12 23.5 4 Z" fill="#ffd030"/>
</svg>
<!-- Word -->
<svg class="a" style="left:385px;top:728px" width="40" height="40" viewBox="0 0 40 40">
<defs><linearGradient id="wdg" x1="0" y1="0" x2="0" y2="1"><stop offset="0" stop-color="#9cb4e0"/><stop offset="0.5" stop-color="#3a64c0"/><stop offset="1" stop-color="#1e48a8"/></linearGradient></defs>
<path d="M7 30.5 V12 Q7 5 14 5 H32.5 V9 H16 V30.5 Z" fill="#f4f6fc"/>
<path d="M8.2 29.5 V12.5 Q8.2 6.2 14.2 6.2 H31 V8.5 H15 V29.5 Z" fill="url(#wdg)"/>
<path d="M15.5 8 L36.5 9.2 L35.5 34 L12 31.5 Z" fill="#f6f8fd"/>
<path d="M15.5 8 L36.5 9.2 L36.2 14 L15 12 Z" fill="#e4eaf6"/>
<path d="M17.5 11.5 H20 L21 17 L23 11.5 H24.5 L25.5 17 L27 11.5 H29 L26.5 19.8 H24.5 L23.5 15 L21.5 19.8 H19.5 Z" fill="#3456a8"/>
<rect x="28.8" y="12" width="4.4" height="1.5" fill="#1e3c94"/><rect x="28.6" y="15.8" width="4.4" height="1.5" fill="#1e3c94"/><rect x="28.4" y="19.4" width="4.6" height="1.5" fill="#1e3c94"/>
<path d="M16.8 21.4 L32 22.4 L32 24 L16.8 23 Z" fill="#1e3c94"/>
<path d="M16.4 25 L32 26 L32 27.6 L16.4 26.6 Z" fill="#1e3c94"/>
</svg>
<!-- Paint -->
<svg class="a" style="left:448px;top:728px" width="40" height="40" viewBox="0 0 40 40">
<defs><radialGradient id="plg" cx="0.4" cy="0.35" r="0.7"><stop offset="0" stop-color="#eaf6fc"/><stop offset="1" stop-color="#a8d4f0"/></radialGradient></defs>
<path d="M6 24 Q5.5 14 18 11 Q30 9 33 17 Q35 26 28 30 Q20 34 14 31 Q12.5 29.5 13.5 27.5 Q14 25.5 11 26.5 Q6.5 28.5 6 24 Z" fill="url(#plg)" stroke="#e8f4fa" stroke-width="0.6"/>
<circle cx="10.6" cy="21.6" r="2.3" fill="#d84030"/>
<circle cx="15.6" cy="16.7" r="2.3" fill="#48a830"/>
<circle cx="22" cy="14.3" r="2.4" fill="#f0b820"/>
<circle cx="18.6" cy="23.4" r="2.3" fill="#2a4a80"/>
<path d="M20 35.5 L28.5 16 L30.5 17 L22 36 Z" fill="#d88a30"/>
<path d="M28.5 16 L30 12 L31.6 12.8 L30.5 17 Z" fill="#b0b8c0"/>
<path d="M29.5 12 Q28 7 29.5 5 Q34 5 36 9.5 Q34.5 12.5 31.8 12.8 Z" fill="#d8a868"/>
</svg>
<!-- skype box -->
<div class="a" style="left:502px;top:729px;width:58px;height:39px;box-sizing:border-box;border:1px solid #a8a8a8;background:linear-gradient(90deg,#767476,#807e80)"></div>
<svg class="a" style="left:512px;top:728px" width="38" height="40" viewBox="0 0 38 40">
<path d="M10 4 Q16 3 22 5 Q34 8 33.5 20 Q34 30 30 34 Q26 36 20 35 Q8 34 5 24 Q3 14 5 9 Q7 4 10 4 Z" fill="#0aa0e0"/>
<text x="18.6" y="28" text-anchor="middle" font-family="Liberation Sans" font-weight="bold" font-size="22" fill="#fff">S</text>
<circle cx="26.8" cy="27.8" r="5.2" fill="#f6f8f0" stroke="#5ab028" stroke-width="0.9"/>
</svg>
<!-- zoom box -->
<div class="a" style="left:564px;top:729px;width:54px;height:39px;box-sizing:border-box;border:1.5px solid #e8e8e8;background:linear-gradient(90deg,#979797,#a3a3a3)"></div>
<div class="a" style="left:618px;top:729px;width:4px;height:39px;box-sizing:border-box;border:1px solid #e0e0e0;background:#999"></div>
<svg class="a" style="left:574px;top:732px" width="32" height="32" viewBox="0 0 32 32">
<rect x="1.5" y="2" width="29" height="28" rx="9" fill="#3d8bf2"/>
<rect x="6.8" y="10.5" width="14" height="11.5" rx="2" fill="#fff"/>
<path d="M20.5 14 L25.5 10.6 L25.5 21.8 L20.5 18.5 Z" fill="#fff"/>
</svg>
<!-- tray -->
<svg class="a" style="left:1100px;top:728px" width="40" height="40" viewBox="0 0 40 40">
<defs><radialGradient id="hq" cx="0.5" cy="0.55" r="0.55"><stop offset="0" stop-color="#0e1458"/><stop offset="0.75" stop-color="#141e70"/><stop offset="1" stop-color="#2a8ae8"/></radialGradient></defs>
<circle cx="19.8" cy="20.8" r="15.6" fill="url(#hq)"/>
<path d="M6 17 Q19.8 12 33.6 17 Q32 7 19.8 5.4 Q7.6 7 6 17 Z" fill="#2a50b0" opacity="0.55"/>
<path d="M14 15 Q14.3 9.4 19.8 9.4 Q25.2 9.4 25.2 14 Q25.2 17 22.2 18.8 Q19.6 20.4 19.6 23.6 L19.6 25" fill="none" stroke="#fff" stroke-width="4.6"/>
<circle cx="19.6" cy="30.6" r="2.9" fill="#fff"/>
</svg>
<svg class="a" style="left:1150px;top:745px" width="10" height="8" viewBox="0 0 10 8"><path d="M1 6.5 L5 2 L9 6.5 Z" fill="#e8e8e8"/></svg>
<svg class="a" style="left:1170px;top:740px" width="18" height="18" viewBox="0 0 18 18">
<rect x="1" y="1" width="1.4" height="15" fill="#f0f0f0"/>
<path d="M2.4 1.5 Q6 0.5 8 2 Q11 3.5 14 2.5 L14 9 Q11 10 8 8.5 Q6 7 2.4 8 Z" fill="#f0f0f0"/>
<circle cx="12.5" cy="12.5" r="4.2" fill="#e03030"/>
<path d="M10.6 10.6 L14.4 14.4 M14.4 10.6 L10.6 14.4" stroke="#fff" stroke-width="1.2"/>
</svg>
<svg class="a" style="left:1200px;top:741px" width="12" height="16" viewBox="0 0 12 16">
<rect x="3.5" y="0.5" width="4" height="1.5" fill="#f0f0f0"/>
<rect x="1.7" y="2" width="7.6" height="13.2" fill="none" stroke="#f0f0f0" stroke-width="1.3"/>
<rect x="3.2" y="8.5" width="4.6" height="5.4" fill="#f0f0f0"/>
</svg>
<svg class="a" style="left:1218px;top:742px" width="18" height="14" viewBox="0 0 18 14">
<rect x="1" y="11" width="2" height="2" fill="#f0f0f0"/><rect x="4.5" y="9" width="2" height="4" fill="#f0f0f0"/><rect x="8" y="6.5" width="2" height="6.5" fill="#f0f0f0"/><rect x="11.5" y="4" width="2" height="9" fill="#f0f0f0"/><rect x="15" y="1" width="2" height="12" fill="#f0f0f0" opacity="0.9"/>
</svg>
<div class="a" style="left:1249px;top:742px;font-size:11px;line-height:14px;color:#f4f4f4;white-space:pre">ENG</div>
<div class="a" style="left:1289px;top:734px;width:59px;text-align:center;font-size:11.5px;line-height:14px;color:#f4f4f4;white-space:pre">11:39</div>
<div class="a" style="left:1289px;top:751px;width:59px;text-align:center;font-size:11.3px;line-height:14px;color:#f4f4f4;white-space:pre">01-06-2020</div>

</body></html>
